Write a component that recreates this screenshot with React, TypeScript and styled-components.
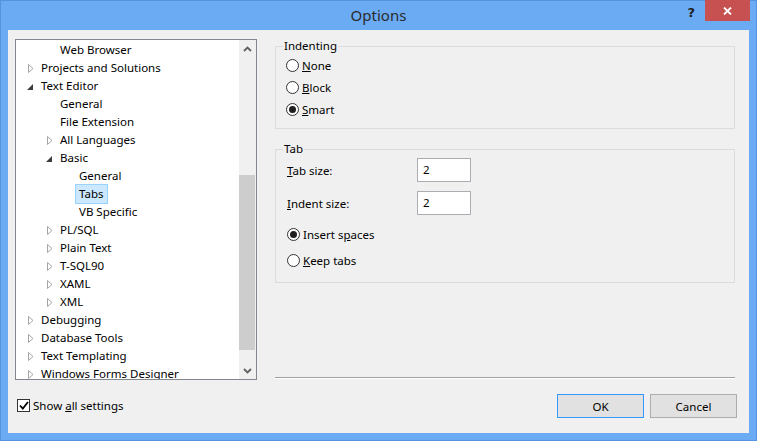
import styled, { createGlobalStyle } from "styled-components"

const GlobalStyle = createGlobalStyle`
  html, body { margin: 0; padding: 0; }
  body {
    font-family: "Noto Sans", "Open Sans", sans-serif;
    font-size: 11.5px;
    color: #000;
  }
  * { box-sizing: border-box; }
`

const Window = styled.div`
  width: 757px;
  height: 441px;
  display: flex;
  flex-direction: column;
  background: #6aabf4;
  border: 1px solid #5693df;
  padding: 0 7px 7px 7px;
`

const TitleBar = styled.div`
  height: 29px;
  flex: none;
  display: grid;
  grid-template-columns: 1fr auto 1fr;
  align-items: start;
`

const Title = styled.div`
  grid-column: 2;
  line-height: 29px;
  font-size: 15px;
  color: #2b2b2b;
`

const Controls = styled.div`
  grid-column: 3;
  justify-self: end;
  display: flex;
  align-items: flex-start;
  margin-right: -1px;
  margin-top: -1px;
`

const HelpButton = styled.div`
  font-family: "DejaVu Sans", sans-serif;
  font-weight: bold;
  font-size: 13px;
  line-height: 26px;
  color: #1e1e1e;
  margin-right: 10px;
`

const CloseButton = styled.div`
  width: 45px;
  height: 21px;
  background: #c75050;
  display: flex;
  align-items: center;
  justify-content: center;
`

const Client = styled.div`
  flex: 1;
  display: flex;
  background: #f0f0f0;
  padding: 9px 12px 15px 7px;
`

const LeftPane = styled.div`
  width: 242px;
  flex: none;
  display: flex;
  flex-direction: column;
  margin-right: 18px;
`

const Tree = styled.div`
  height: 341px;
  display: flex;
  background: #fff;
  border: 1px solid #828790;
`

const TreeList = styled.div`
  flex: 1;
  padding-top: 1px;
  overflow: hidden;
`

const Row = styled.div<{ $level: number }>`
  height: 18px;
  display: flex;
  align-items: center;
  white-space: nowrap;
  padding-left: ${p => 1 + p.$level * 19}px;
`

const Expander = styled.div`
  width: 20px;
  flex: none;
  display: flex;
  align-items: center;
  padding-left: 11px;
`

const ItemLabel = styled.span<{ $selected?: boolean }>`
  line-height: 18px;
  padding: 0 3px;
  border: 1px solid ${p => (p.$selected ? "#99d1ff" : "transparent")};
  background: ${p => (p.$selected ? "#cce8ff" : "transparent")};
`

const ScrollBar = styled.div`
  width: 17px;
  flex: none;
  display: flex;
  flex-direction: column;
  background: #f0f0f0;
`

const ScrollButton = styled.div`
  height: 17px;
  flex: none;
  display: flex;
  align-items: center;
  justify-content: center;
`

const Track = styled.div`
  flex: 1;
  padding: 0 1px 0 0;
`

const Thumb = styled.div<{ $offset: number; $size: number }>`
  margin-top: ${p => p.$offset}px;
  height: ${p => p.$size}px;
  background: #cdcdcd;
`

const CheckRow = styled.label`
  height: 14px;
  margin-top: 18px;
  padding-left: 2px;
  display: flex;
  align-items: center;
  gap: 3px;
`

const CheckBox = styled.span`
  width: 13px;
  height: 13px;
  border: 1px solid #333;
  background: #fff;
  display: flex;
  align-items: center;
  justify-content: center;
`

const RightPane = styled.div`
  flex: 1;
  display: flex;
  flex-direction: column;
`

const GroupBox = styled.fieldset<{ $inset: number; $top: number; $bottom: number }>`
  margin: 0 2px 0 0;
  min-width: 0;
  border: 1px solid #dcdcdc;
  padding: ${p => p.$top}px 10px ${p => p.$bottom}px ${p => p.$inset}px;
  & + & { margin-top: 13px; }
`

const Legend = styled.legend<{ $shift: number }>`
  padding: 0 1px;
  margin-left: ${p => p.$shift}px;
  line-height: 14px;
`

const RadioRow = styled.label`
  height: 22px;
  display: flex;
  align-items: center;
  gap: 3px;
`

const RadioCircle = styled.span`
  width: 13px;
  height: 13px;
  border-radius: 50%;
  border: 1px solid #333;
  background: #fff;
  display: flex;
  align-items: center;
  justify-content: center;
`

const RadioDot = styled.span`
  width: 7px;
  height: 7px;
  border-radius: 50%;
  background: #1e1e1e;
`

const FieldRow = styled.div`
  height: 24px;
  display: grid;
  grid-template-columns: 130px 54px;
  align-items: center;
  & + & { margin-top: 9px; }
`

const NumberBox = styled.div`
  height: 24px;
  border: 1px solid #abadb3;
  background: #fff;
  padding: 0 5px;
  line-height: 22px;
`

const RadioStack = styled.div`
  margin-top: 8px;
  display: flex;
  flex-direction: column;
  gap: 4px;
`

const Separator = styled.div`
  margin: auto 2px 0 0;
  height: 2px;
  border-top: 1px solid #a0a0a0;
  border-bottom: 1px solid #fff;
`

const ButtonRow = styled.div`
  margin-top: 15px;
  display: flex;
  justify-content: flex-end;
  gap: 6px;
`

const Button = styled.button<{ $default?: boolean }>`
  width: 87px;
  height: 24px;
  font: inherit;
  color: #000;
  background: #e1e1e1;
  border: 1px solid ${p => (p.$default ? "#3399ff" : "#adadad")};
  padding: 0;
`

type Node = {
  level: number
  label: string
  state?: "collapsed" | "expanded"
  selected?: boolean
}

const nodes: Node[] = [
  { level: 1, label: "Web Browser" },
  { level: 0, label: "Projects and Solutions", state: "collapsed" },
  { level: 0, label: "Text Editor", state: "expanded" },
  { level: 1, label: "General" },
  { level: 1, label: "File Extension" },
  { level: 1, label: "All Languages", state: "collapsed" },
  { level: 1, label: "Basic", state: "expanded" },
  { level: 2, label: "General" },
  { level: 2, label: "Tabs", selected: true },
  { level: 2, label: "VB Specific" },
  { level: 1, label: "PL/SQL", state: "collapsed" },
  { level: 1, label: "Plain Text", state: "collapsed" },
  { level: 1, label: "T-SQL90", state: "collapsed" },
  { level: 1, label: "XAML", state: "collapsed" },
  { level: 1, label: "XML", state: "collapsed" },
  { level: 0, label: "Debugging", state: "collapsed" },
  { level: 0, label: "Database Tools", state: "collapsed" },
  { level: 0, label: "Text Templating", state: "collapsed" },
  { level: 0, label: "Windows Forms Designer", state: "collapsed" },
]

function Arrow({ state }: { state?: "collapsed" | "expanded" }) {
  if (state === "collapsed")
    return (
      <svg width="6" height="9" viewBox="0 0 6 9">
        <polygon points="0.5,0.5 5,4.5 0.5,8.5" fill="none" stroke="#a6a6a6" />
      </svg>
    )
  if (state === "expanded")
    return (
      <svg width="6" height="9" viewBox="0 0 6 9" style={{ marginLeft: -1 }}>
        <polygon points="6,2 6,8 0,8" fill="#3c3c3c" />
      </svg>
    )
  return null
}

function Radio({ checked, children }: { checked?: boolean; children: React.ReactNode }) {
  return (
    <RadioRow>
      <RadioCircle>{checked && <RadioDot />}</RadioCircle>
      <span>{children}</span>
    </RadioRow>
  )
}

export default function App() {
  return (
    <>
      <GlobalStyle />
      <Window>
        <TitleBar>
          <Title>Options</Title>
          <Controls>
            <HelpButton>?</HelpButton>
            <CloseButton>
              <svg width="9" height="8" viewBox="0 0 9 8">
                <path d="M1 0.5 L8 7.5 M8 0.5 L1 7.5" stroke="#fff" strokeWidth="1.8" />
              </svg>
            </CloseButton>
          </Controls>
        </TitleBar>

        <Client>
          <LeftPane>
            <Tree>
              <TreeList>
                {nodes.map((n, i) => (
                  <Row key={i} $level={n.level}>
                    <Expander>
                      <Arrow state={n.state} />
                    </Expander>
                    <ItemLabel $selected={n.selected}>{n.label}</ItemLabel>
                  </Row>
                ))}
              </TreeList>
              <ScrollBar>
                <ScrollButton>
                  <svg width="9" height="6" viewBox="0 0 9 6">
                    <path d="M1 5 L4.5 1.5 L8 5" fill="none" stroke="#606060" strokeWidth="1.8" />
                  </svg>
                </ScrollButton>
                <Track>
                  <Thumb $offset={118} $size={175} />
                </Track>
                <ScrollButton>
                  <svg width="9" height="6" viewBox="0 0 9 6">
                    <path d="M1 1 L4.5 4.5 L8 1" fill="none" stroke="#606060" strokeWidth="1.8" />
                  </svg>
                </ScrollButton>
              </ScrollBar>
            </Tree>
            <CheckRow>
              <CheckBox>
                <svg width="10" height="9" viewBox="0 0 10 9">
                  <path d="M1 4.5 L3.8 7.5 L9 1" fill="none" stroke="#000" strokeWidth="1.8" />
                </svg>
              </CheckBox>
              <span>
                Show <u>a</u>ll settings
              </span>
            </CheckRow>
          </LeftPane>

          <RightPane>
            <GroupBox $inset={10} $top={1} $bottom={8}>
              <Legend $shift={-3}>Indenting</Legend>
              <Radio>
                <u>N</u>one
              </Radio>
              <Radio>
                <u>B</u>lock
              </Radio>
              <Radio checked>
                <u>S</u>mart
              </Radio>
            </GroupBox>

            <GroupBox $inset={11} $top={2} $bottom={11}>
              <Legend $shift={-4}>Tab</Legend>
              <FieldRow>
                <span>
                  <u>T</u>ab size:
                </span>
                <NumberBox>2</NumberBox>
              </FieldRow>
              <FieldRow>
                <span>
                  <u>I</u>ndent size:
                </span>
                <NumberBox>2</NumberBox>
              </FieldRow>
              <RadioStack>
                <Radio checked>
                  Insert s<u>p</u>aces
                </Radio>
                <Radio>
                  <u>K</u>eep tabs
                </Radio>
              </RadioStack>
            </GroupBox>

            <Separator />
            <ButtonRow>
              <Button $default>OK</Button>
              <Button>Cancel</Button>
            </ButtonRow>
          </RightPane>
        </Client>
      </Window>
    </>
  )
}
